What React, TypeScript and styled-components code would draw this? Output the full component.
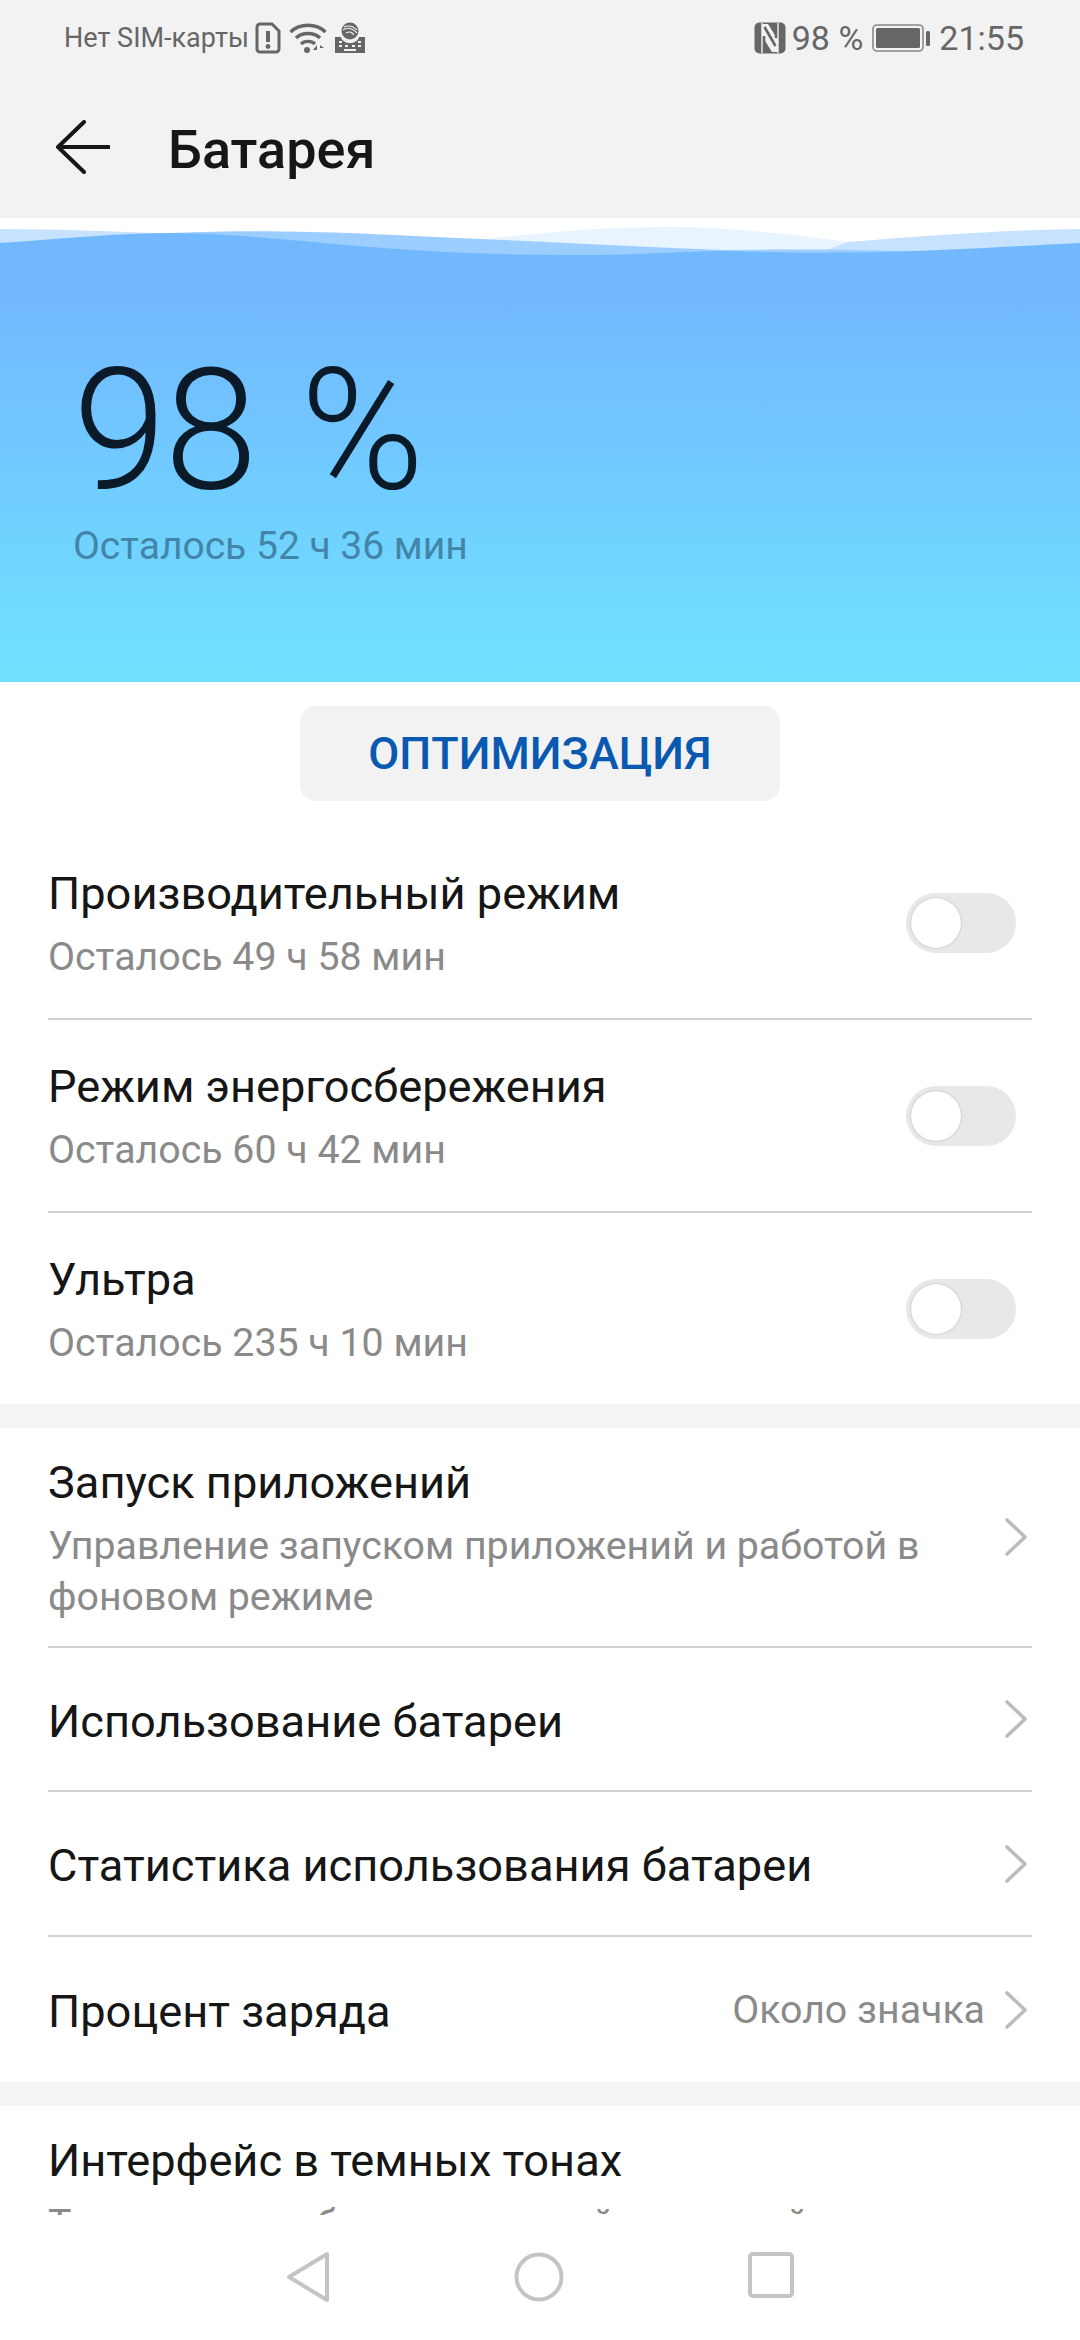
import React from "react";
import styled, { createGlobalStyle } from "styled-components";

const Global = createGlobalStyle`
  html, body { margin: 0; padding: 0; background: #fff; }
  body { font-family: Roboto, "Noto Sans", sans-serif; }
  * { box-sizing: border-box; }
`;

const Page = styled.div`
  width: 1080px;
  height: 2340px;
  display: flex;
  flex-direction: column;
  overflow: hidden;
  background: #fff;
`;

const Header = styled.header`
  height: 218px;
  flex: none;
  background: #f2f2f2;
  display: flex;
  flex-direction: column;
`;

const StatusBar = styled.div`
  height: 76px;
  flex: none;
  padding: 0 56px 0 64px;
  display: flex;
  align-items: center;
  justify-content: space-between;
  color: #666;
`;

const StatusGroup = styled.div`
  display: flex;
  align-items: center;
`;

const StatusText = styled.span<{ $size?: number; $left?: number }>`
  font-size: ${(p) => p.$size ?? 27}px;
  margin-left: ${(p) => p.$left ?? 0}px;
  line-height: 38px;
  white-space: nowrap;
`;

const StatusIcon = styled.svg<{ $left: number }>`
  display: block;
  flex: none;
  margin-left: ${(p) => p.$left}px;
`;

const TitleBar = styled.div`
  height: 142px;
  flex: none;
  padding-left: 56px;
  display: flex;
  align-items: center;
`;

const BackIcon = styled.svg`
  display: block;
  flex: none;
`;

const Title = styled.h1`
  margin: 4px 0 0 58px;
  font-size: 54px;
  font-weight: 500;
  color: #161616;
`;

const Content = styled.main`
  flex: 1;
  min-height: 0;
  overflow: hidden;
  display: flex;
  flex-direction: column;
`;

const Waves = styled.svg`
  display: block;
  flex: none;
  width: 1080px;
  height: 60px;
  margin-bottom: -1px;
`;

const Hero = styled.section`
  flex: none;
  height: 405px;
  padding: 70px 0 0 73px;
  display: flex;
  flex-direction: column;
  background: linear-gradient(180deg, #72b8ff 0%, #72b8ff 6%, #6fe2ff 100%);
`;

const Percent = styled.div`
  font-size: 168px;
  line-height: 168px;
  font-weight: 300;
  letter-spacing: -2px;
  word-spacing: 6px;
  color: #0b1a28;
  white-space: nowrap;
`;

const HeroSub = styled.div`
  font-size: 39px;
  line-height: 44px;
  color: #4285a8;
  margin-top: 9px;
`;

const ButtonRow = styled.div`
  flex: none;
  height: 145px;
  padding-top: 24px;
  display: flex;
  justify-content: center;
  align-items: flex-start;
`;

const OptimizeButton = styled.button`
  width: 480px;
  height: 95px;
  border: 0;
  border-radius: 16px;
  background: #f2f2f2;
  color: #0a59b0;
  font-family: inherit;
  font-size: 45px;
  font-weight: 500;
`;

const Group = styled.section`
  flex: none;
  padding: 0 48px;
`;

const Gap = styled.div`
  flex: none;
  height: 24px;
  background: #f5f5f5;
`;

const Row = styled.div<{ $height: number; $divider?: boolean }>`
  height: ${(p) => p.$height}px;
  display: flex;
  align-items: center;
  border-bottom: ${(p) => (p.$divider ? "2px solid #d2d2d2" : "0")};
`;

const RowText = styled.div<{ $sub?: boolean }>`
  flex: 1;
  min-width: 0;
  padding-top: ${(p) => (p.$sub ? 6 : 5)}px;
`;

const RowTitle = styled.div`
  font-size: 45.2px;
  line-height: 52px;
  color: #161616;
  white-space: nowrap;
`;

const RowSub = styled.div<{ $nowrap?: boolean }>`
  font-size: 39.3px;
  line-height: 51px;
  color: #8a8a8a;
  margin-top: 12px;
  max-width: 930px;
  white-space: ${(p) => (p.$nowrap ? "nowrap" : "normal")};
`;

const RowValue = styled.span`
  font-size: 39.3px;
  color: #8a8a8a;
  white-space: nowrap;
  margin-right: 18px;
`;

const Track = styled.div`
  width: 110px;
  height: 60px;
  flex: none;
  margin-right: 16px;
  padding: 5px;
  border-radius: 30px;
  background: #e8e8e8;
`;

const Knob = styled.div`
  width: 50px;
  height: 50px;
  border-radius: 50%;
  background: #fff;
  box-shadow: 0 0 2px rgba(0, 0, 0, 0.28);
`;

const ChevronIcon = styled.svg`
  flex: none;
  display: block;
  margin-right: 3px;
`;

const NavBar = styled.nav`
  flex: none;
  height: 125px;
  background: #fff;
  display: flex;
  justify-content: center;
  align-items: flex-start;
  gap: 184px;
  padding-top: 36px;
`;

const NavIcon = styled.svg`
  display: block;
  flex: none;
`;

const Chevron = () => (
  <ChevronIcon width="26" height="40" viewBox="0 0 26 40" fill="none">
    <path d="M4 3 L22 20 L4 37" stroke="#bcbcbc" strokeWidth="3.6" strokeLinecap="round" strokeLinejoin="round" />
  </ChevronIcon>
);

const Toggle = () => (
  <Track>
    <Knob />
  </Track>
);

export default function App() {
  return (
    <Page>
      <Global />
      <Header>
        <StatusBar>
          <StatusGroup>
            <StatusText>Нет SIM-карты</StatusText>
            <StatusIcon $left={6} width="26" height="32" viewBox="0 0 26 32" fill="none">
              <path d="M5 2 H17 L24 9 V27 A3 3 0 0 1 21 30 H5 A3 3 0 0 1 2 27 V5 A3 3 0 0 1 5 2 Z" stroke="#666" strokeWidth="3" />
              <path d="M13 9 V20" stroke="#666" strokeWidth="4" />
              <circle cx="13" cy="24.5" r="2.4" fill="#666" />
            </StatusIcon>
            <StatusIcon $left={8} width="38" height="32" viewBox="0 0 38 32" fill="none">
              <path d="M1.5 10 C11 1 27 1 36.5 10" stroke="#666" strokeWidth="3.4" />
              <path d="M7 16 C13 10 25 10 31 16" stroke="#666" strokeWidth="3.4" />
              <path d="M12 22 C15.5 18.5 22.5 18.5 26 22" stroke="#666" strokeWidth="3.2" />
              <circle cx="18" cy="28" r="3" fill="#666" />
              <path d="M28 31 V23 L24 28 H28 Z M31 31 V23 L35 26 H31 Z" fill="#666" />
            </StatusIcon>
            <StatusIcon $left={7} width="32" height="32" viewBox="0 0 32 32" fill="none">
              <circle cx="16" cy="9" r="8.5" fill="#666" />
              <path d="M9 8 C13 5 19 6 23 11 M10 5 C15 3 20 5 23 8 M12 11 C15 9 18 10 20 13" stroke="#f2f2f2" strokeWidth="1.1" />
              <path d="M1 15 H7 C8 19 12 21 16 21 C20 21 24 19 25 15 H31 V31 H1 Z" fill="#666" />
              <path d="M5 20 h3 M5 24 h3 M11 24 h3 M18 24 h3 M24 24 h3 M24 20 h3 M10 28 h12" stroke="#f2f2f2" strokeWidth="2" />
            </StatusIcon>
          </StatusGroup>
          <StatusGroup>
            <StatusIcon $left={0} width="32" height="32" viewBox="0 0 32 32" fill="none">
              <rect x="0.5" y="0.5" width="31" height="31" rx="5" fill="#666" />
              <path d="M8 2 H14 L24 18 V30 H18 L8 14 Z" fill="#f2f2f2" />
              <path d="M10.5 5 L21.5 24 M10 14 V28.5 H14 M22 3.5 V16" stroke="#666" strokeWidth="2.6" />
              <path d="M8 1 V31 M24 1 V31" stroke="#f2f2f2" strokeWidth="1.4" />
            </StatusIcon>
            <StatusText $size={34} $left={6}>98 %</StatusText>
            <StatusIcon $left={9} width="58" height="28" viewBox="0 0 58 28" fill="none">
              <rect x="1" y="1" width="50" height="26" rx="4" stroke="#888" strokeWidth="1.6" />
              <rect x="4" y="4" width="44" height="20" rx="1.5" fill="#666" />
              <rect x="54" y="7" width="4" height="15" rx="1.5" fill="#666" />
            </StatusIcon>
            <StatusText $size={34} $left={9}>21:55</StatusText>
          </StatusGroup>
        </StatusBar>
        <TitleBar>
          <BackIcon width="54" height="54" viewBox="0 0 54 54" fill="none">
            <path d="M28 2 L2 27 L28 52 M2 27 H53" stroke="#161616" strokeWidth="4" strokeLinecap="round" strokeLinejoin="round" />
          </BackIcon>
          <Title>Батарея</Title>
        </TitleBar>
      </Header>
      <Content>
        <Waves viewBox="0 0 1080 60" preserveAspectRatio="none">
          <path d="M480 22 C540 14 610 9 668 9 C730 9 790 16 860 26 L960 40 V60 H480 Z" fill="#e8f4ff" />
          <path d="M847 24 C920 18 1000 12 1080 11 V60 H760 Z" fill="#c6e2ff" />
          <path d="M0 11 C60 11 120 14 190 16 L190 60 H0 Z" fill="#c6e2ff" />
          <path d="M172 15 C220 13 270 13 310 14 C370 15 430 19 482 21 C570 25 650 29 723 32 C760 32 830 30 920 34 V60 H172 Z" fill="#9ccdff" />
          <path d="M0 25 C60 21 120 15 172 15 C250 16 320 26 413 32 C470 36 530 37 585 37 C640 37 690 33 723 33 C790 35 840 35 881 34 C950 32 1020 28 1080 25 V60 H0 Z" fill="#72b8ff" />
        </Waves>
        <Hero>
          <Percent>98 %</Percent>
          <HeroSub>Осталось 52 ч 36 мин</HeroSub>
        </Hero>
        <ButtonRow>
          <OptimizeButton>ОПТИМИЗАЦИЯ</OptimizeButton>
        </ButtonRow>
        <Group>
          <Row $height={193} $divider>
            <RowText $sub>
              <RowTitle>Производительный режим</RowTitle>
              <RowSub>Осталось 49 ч 58 мин</RowSub>
            </RowText>
            <Toggle />
          </Row>
          <Row $height={193} $divider>
            <RowText $sub>
              <RowTitle>Режим энергосбережения</RowTitle>
              <RowSub>Осталось 60 ч 42 мин</RowSub>
            </RowText>
            <Toggle />
          </Row>
          <Row $height={191}>
            <RowText $sub>
              <RowTitle>Ультра</RowTitle>
              <RowSub>Осталось 235 ч 10 мин</RowSub>
            </RowText>
            <Toggle />
          </Row>
        </Group>
        <Gap />
        <Group>
          <Row $height={220} $divider>
            <RowText $sub>
              <RowTitle>Запуск приложений</RowTitle>
              <RowSub>Управление запуском приложений и работой в фоновом режиме</RowSub>
            </RowText>
            <Chevron />
          </Row>
          <Row $height={144} $divider>
            <RowText>
              <RowTitle>Использование батареи</RowTitle>
            </RowText>
            <Chevron />
          </Row>
          <Row $height={145} $divider>
            <RowText>
              <RowTitle>Статистика использования батареи</RowTitle>
            </RowText>
            <Chevron />
          </Row>
          <Row $height={145}>
            <RowText>
              <RowTitle>Процент заряда</RowTitle>
            </RowText>
            <RowValue>Около значка</RowValue>
            <Chevron />
          </Row>
        </Group>
        <Gap />
        <Group>
          <Row $height={167}>
            <RowText $sub>
              <RowTitle>Интерфейс в темных тонах</RowTitle>
              <RowSub $nowrap>Темная схема бережет ночной экранный ресурс</RowSub>
            </RowText>
          </Row>
        </Group>
      </Content>
      <NavBar>
        <NavIcon width="44" height="52" viewBox="0 0 44 52" fill="none">
          <path d="M41 3 V49 L3 26 Z" stroke="#c4c4c4" strokeWidth="4" strokeLinejoin="round" />
        </NavIcon>
        <NavIcon width="50" height="52" viewBox="0 0 50 52" fill="none">
          <circle cx="25" cy="26" r="22.5" stroke="#c4c4c4" strokeWidth="4" />
        </NavIcon>
        <NavIcon width="46" height="48" viewBox="0 0 46 48" fill="none">
          <rect x="2" y="3" width="42" height="42" rx="3" stroke="#c4c4c4" strokeWidth="4" />
        </NavIcon>
      </NavBar>
    </Page>
  );
}
